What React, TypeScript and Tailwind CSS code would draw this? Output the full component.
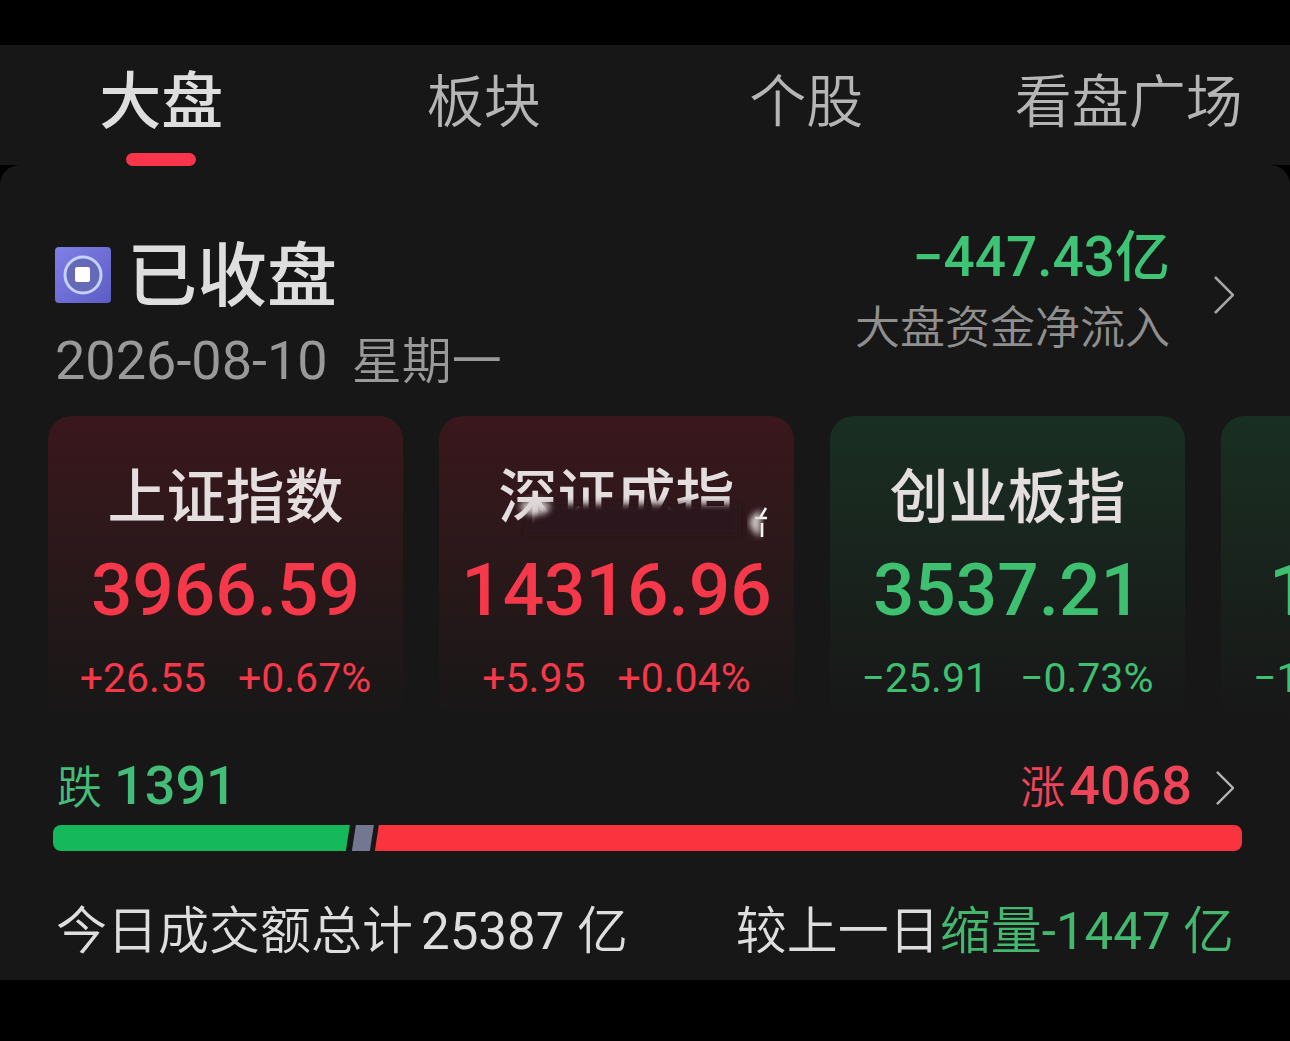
const tabs = ["大盘", "板块", "个股", "看盘广场"];

const indices = [
  { name: "上证指数", value: "3966.59", change: "+26.55", percent: "+0.67%", up: true },
  { name: "深证成指", value: "14316.96", change: "+5.95", percent: "+0.04%", up: true, smudged: true },
  { name: "创业板指", value: "3537.21", change: "−25.91", percent: "−0.73%", up: false },
];

const breadth = { down: 1391, flat: 84, up: 4068 };

function Chevron({ className }: { className: string }) {
  return (
    <svg viewBox="0 0 20 38" fill="none" stroke="currentColor" strokeWidth="2.5" className={className} aria-hidden="true">
      <path d="M1 1 L19 19 L1 37" />
    </svg>
  );
}

function StatusIcon() {
  return (
    <svg viewBox="0 0 56 56" className="size-14 shrink-0" aria-hidden="true">
      <defs>
        <linearGradient id="status" x1="0" y1="0" x2="1" y2="1">
          <stop offset="0" stopColor="#7f80e6" />
          <stop offset="1" stopColor="#5d5cc4" />
        </linearGradient>
      </defs>
      <rect width="56" height="56" rx="4" fill="url(#status)" />
      <circle cx="28" cy="28" r="18" fill="#6668b8" stroke="#c3d2ff" strokeWidth="3" />
      <rect x="20" y="20" width="15" height="15" rx="2" fill="#fff" />
    </svg>
  );
}

// Erased patch over the lower half of the name, with the leftover of a caption beside it
function Smudge() {
  return (
    <svg
      viewBox="0 0 280 60"
      className="pointer-events-none absolute top-[78px] left-14 h-[60px] w-[280px]"
      aria-hidden="true"
    >
      <defs>
        <filter id="soft" x="-20%" y="-60%" width="140%" height="220%">
          <feGaussianBlur stdDeviation="3" />
        </filter>
      </defs>
      <path d="M36 20 L58 10 H244 V40 H30 Z" fill="#2a171a" filter="url(#soft)" />
      <ellipse cx="40" cy="13" rx="15" ry="8" fill="#dcd4d4" filter="url(#soft)" opacity="0.85" />
      <path d="M271 14 L265 24 M260 24 H272 M267 29 V43" fill="none" stroke="#fff" strokeWidth="2.5" />
      <path d="M266 16 Q244 27 265 43 Z" fill="#d5cdcd" filter="url(#soft)" />
    </svg>
  );
}

export default function App() {
  return (
    <div className="min-h-screen overflow-hidden bg-black pt-[45px] pb-[60px] font-[Roboto,'Noto_Sans_CJK_SC',sans-serif] text-[#dedede]">
      <nav className="grid h-[120px] grid-cols-4 bg-[#171717]">
        {tabs.map((tab, i) => (
          <button key={tab} type="button" className="flex flex-col items-center pt-5">
            <span
              className={
                i === 0
                  ? "text-[62px] leading-[76px] font-medium whitespace-nowrap"
                  : "text-[57px] leading-[76px] font-[350] whitespace-nowrap text-[#b5b5b5]"
              }
            >
              {tab}
            </span>
            {i === 0 && <span className="mt-3 h-[13px] w-[70px] shrink-0 rounded-full bg-[#f8354a]" />}
          </button>
        ))}
      </nav>

      <main className="rounded-t-[20px] bg-[#171717] pt-[60px] pb-3">
        <header className="flex items-start justify-between pr-14 pl-[55px]">
          <div>
            <div className="flex h-[100px] items-center gap-4">
              <StatusIcon />
              <h1 className="pt-1 text-[70px] leading-[100px] font-medium">已收盘</h1>
            </div>
            <p className="flex items-baseline gap-6 text-[54px] leading-[72px] text-[#999]">
              <span>2026-08-10</span>
              <span className="text-[50px] font-[350]">星期一</span>
            </p>
          </div>
          <a href="#flow" className="flex items-center gap-11">
            <span className="text-right">
              <span className="block text-[55px] leading-[64px] font-medium text-[#3fc476]">−447.43亿</span>
              <span className="block pt-1 text-[45px] leading-[72px] font-[350] text-[#8f8f8f]">大盘资金净流入</span>
            </span>
            <Chevron className="h-[38px] w-5 text-[#a5a5a5]" />
          </a>
        </header>

        <section className="mt-[18px] flex gap-9 overflow-hidden pl-12">
          {indices.map((item) => (
            <article
              key={item.name}
              className={`relative h-[306px] w-[355px] shrink-0 rounded-3xl bg-gradient-to-b to-[#171717] pt-10 text-center ${
                item.up ? "from-[#3a171c] text-[#f5384a]" : "from-[#192f23] text-[#3fbf70]"
              }`}
            >
              <h2 className="text-[59px] leading-[84px] font-medium text-[#e4dede]">{item.name}</h2>
              {item.smudged && <Smudge />}
              <p className="relative text-[73px] leading-[100px] font-medium">{item.value}</p>
              <p className="flex justify-center gap-8 text-[41px] leading-[76px]">
                <span>{item.change}</span>
                <span>{item.percent}</span>
              </p>
            </article>
          ))}
          <article className="h-[306px] w-[355px] shrink-0 rounded-3xl bg-gradient-to-b from-[#192f23] to-[#171717] pt-[124px] pl-12 text-[#3fbf70]">
            <p className="text-[73px] leading-[100px] font-medium">1</p>
            <p className="-ml-4 text-[41px] leading-[76px]">−1</p>
          </article>
        </section>

        <section className="pr-12 pl-[53px]">
          <div className="flex items-center justify-between pt-7 pr-2 pl-1 text-[54px] leading-[72px] font-medium">
            <p className="flex items-baseline gap-3 text-[#43bd78]">
              <span className="text-[45px] font-[350]">跌</span>
              <span>1391</span>
            </p>
            <a href="#breadth" className="flex items-center gap-6 text-[#f04458]">
              <span className="flex items-baseline gap-1">
                <span className="text-[45px] font-[350]">涨</span>
                <span>4068</span>
              </span>
              <Chevron className="h-[34px] w-[18px] text-[#b5b5b5]" />
            </a>
          </div>
          <div className="flex h-[26px]">
            <div
              className="rounded-l-lg bg-[#15b85a] [clip-path:polygon(0_0,100%_0,calc(100%-4px)_100%,0_100%)]"
              style={{ flex: breadth.down }}
            />
            <div
              className="min-w-6 bg-[#737890] [clip-path:polygon(6px_0,100%_0,calc(100%-4px)_100%,2px_100%)]"
              style={{ flex: breadth.flat }}
            />
            <div
              className="rounded-r-lg bg-[#fa333e] [clip-path:polygon(5px_0,100%_0,100%_100%,1px_100%)]"
              style={{ flex: breadth.up }}
            />
          </div>
        </section>

        <footer className="flex items-baseline justify-between pt-11 pr-14 pl-14 text-[51px] leading-[73px] font-[350] whitespace-nowrap">
          <p className="flex gap-2">
            <span>今日成交额总计</span>
            <span className="font-normal">
              25387 <span className="font-[350]">亿</span>
            </span>
          </p>
          <p>
            较上一日
            <span className="text-[#45b870]">
              缩量<span className="font-normal">-1447</span> 亿
            </span>
          </p>
        </footer>
      </main>
    </div>
  );
}
